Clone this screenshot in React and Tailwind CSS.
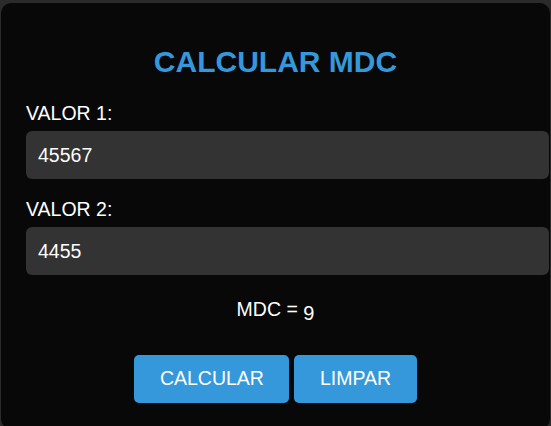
export default function App() {
  return (
    <div className="h-[426px] w-[551px] overflow-hidden bg-[#2b2b2b] pt-[3px] pl-[1px]" style={{ fontFamily: '"Liberation Sans", Arial, sans-serif' }}>
      <div className="h-[426px] w-[549px] rounded-[10px] bg-[#080808] px-[25px] pt-[42px]">
        <h1 className="text-center text-[30px] font-bold leading-[34px] text-[#3498db]">CALCULAR MDC</h1>
        <div className="mt-[22.5px] text-[19.5px] leading-[22.5px] text-white">VALOR 1:</div>
        <input
          className="mt-[7px] block h-[48px] w-[523px] rounded-[6px] bg-[#333333] px-[12px] text-[19.5px] text-white outline-none"
          defaultValue="45567"
        />
        <div className="mt-[18.5px] text-[19.5px] leading-[22.5px] text-white">VALOR 2:</div>
        <input
          className="mt-[7px] block h-[48px] w-[523px] rounded-[6px] bg-[#333333] px-[12px] text-[19.5px] text-white outline-none"
          defaultValue="4455"
        />
        <div className="mt-[22.5px] text-center text-[19.5px] leading-[22.5px] text-white">
          MDC = <span className="align-[-4px] text-[20px]">9</span>
        </div>
        <div className="mt-[31px] flex justify-center gap-[5px]">
          <button className="h-[48px] rounded-[5px] bg-[#3498db] px-[25.5px] text-[19.5px] text-white">CALCULAR</button>
          <button className="h-[48px] rounded-[5px] bg-[#3498db] px-[25.5px] text-[19.5px] text-white">LIMPAR</button>
        </div>
      </div>
    </div>
  );
}
